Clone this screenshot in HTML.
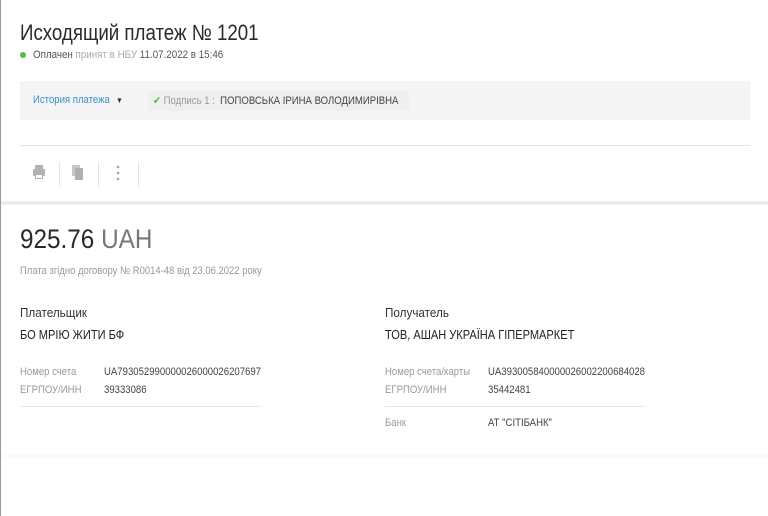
<!DOCTYPE html><html><head><meta charset="utf-8"><style>
body{margin:0;width:768px;height:516px;background:#fff;font-family:"Liberation Sans",sans-serif;position:relative;overflow:hidden;color:#333}
.a{position:absolute;white-space:nowrap;transform-origin:left top}
.lb{border-left:1px solid #999;position:absolute;left:0;top:0;bottom:0}
.v{font-size:11px;transform:scaleX(.87)}
</style></head><body>
<div class="lb"></div>
<div class="a" style="left:20px;top:20px;font-size:22px;color:#2a2a2a;transform:scaleX(.85)">Исходящий платеж № 1201</div>
<div style="position:absolute;left:20px;top:52px;width:6px;height:6px;border-radius:50%;background:#5ab947"></div>
<div class="a" style="left:33px;top:49px;font-size:11px;color:#555;transform:scaleX(.89)">Оплачен <span style="color:#aaa">принят в НБУ</span> 11.07.2022 в 15:46</div>
<div style="position:absolute;left:20px;top:81px;width:730px;height:39px;background:#f4f4f4"></div>
<div style="position:absolute;left:148px;top:91px;width:261px;height:20px;background:#efefef"></div>
<div class="a" style="left:33px;top:94px;font-size:11px;color:#3b8fc6;transform:scaleX(.87)">История платежа <span style="color:#333;font-size:8px;margin-left:4px">▼</span></div>
<div class="a" style="left:153px;top:94px;font-size:11px;color:#999;transform:scaleX(.87)"><span style="color:#5ab947">✔</span> Подпись 1 : &nbsp;<span style="color:#444">ПОПОВСЬКА ІРИНА ВОЛОДИМИРІВНА</span></div>
<div style="position:absolute;left:20px;top:145px;width:730px;height:1px;background:#e2e2e2"></div>
<svg style="position:absolute;left:30px;top:162px" width="110" height="26">
<rect x="29" y="0" width="1" height="25" fill="#e6e6e6"/><rect x="68" y="0" width="1" height="25" fill="#e6e6e6"/><rect x="108" y="0" width="1" height="25" fill="#e6e6e6"/>
<rect x="5" y="3" width="8" height="4" fill="#b3b3b3"/><rect x="3" y="7" width="12" height="7" rx="1" fill="#b3b3b3"/><rect x="5" y="12" width="8" height="5" fill="#b3b3b3"/><rect x="6" y="13" width="6" height="3" fill="#fff"/>
<rect x="42" y="3" width="8" height="11" fill="#c8c8c8"/><rect x="45" y="6" width="8" height="12" fill="#b0b0b0"/>
<circle cx="88" cy="5" r="1.4" fill="#aaa"/><circle cx="88" cy="11" r="1.4" fill="#aaa"/><circle cx="88" cy="17" r="1.4" fill="#aaa"/>
</svg>
<div style="position:absolute;left:1px;top:200px;width:767px;height:5px;background:linear-gradient(#fff,#e6e6e6 60%,#f4f4f4)"></div>
<div class="a" style="left:20px;top:224px;font-size:27px;color:#2a2a2a;transform:scaleX(.9)">925.76 <span style="color:#777">UAH</span></div>
<div class="a" style="left:20px;top:265px;font-size:11px;color:#999;transform:scaleX(.86)">Плата згідно договору № R0014-48 від 23.06.2022 року</div>
<div class="a" style="left:20px;top:305px;font-size:13px;color:#333;transform:scaleX(.9)">Плательщик</div>
<div class="a" style="left:20px;top:327px;font-size:13px;color:#222;transform:scaleX(.85)">БО МРІЮ ЖИТИ БФ</div>
<div class="a" style="left:385px;top:305px;font-size:13px;color:#333;transform:scaleX(.9)">Получатель</div>
<div class="a" style="left:385px;top:327px;font-size:13px;color:#222;transform:scaleX(.85)">ТОВ, АШАН УКРАЇНА ГІПЕРМАРКЕТ</div>
<div class="a v" style="left:20px;top:366px;color:#999">Номер счета</div>
<div class="a v" style="left:104px;top:366px;color:#444">UA793052990000026000026207697</div>
<div class="a v" style="left:20px;top:384px;color:#999">ЕГРПОУ/ИНН</div>
<div class="a v" style="left:104px;top:384px;color:#444">39333086</div>
<div style="position:absolute;left:20px;top:406px;width:241px;height:1px;background:#e6e6e6"></div>
<div class="a v" style="left:385px;top:366px;color:#999">Номер счета/карты</div>
<div class="a v" style="left:488px;top:366px;color:#444">UA393005840000026002200684028</div>
<div class="a v" style="left:385px;top:384px;color:#999">ЕГРПОУ/ИНН</div>
<div class="a v" style="left:488px;top:384px;color:#444">35442481</div>
<div style="position:absolute;left:385px;top:406px;width:260px;height:1px;background:#e6e6e6"></div>
<div class="a v" style="left:385px;top:417px;color:#999">Банк</div>
<div class="a v" style="left:488px;top:417px;color:#444">АТ "СІТІБАНК"</div>
<div style="position:absolute;left:1px;top:455px;width:767px;height:2px;background:#fafafa"></div>
</body></html>
